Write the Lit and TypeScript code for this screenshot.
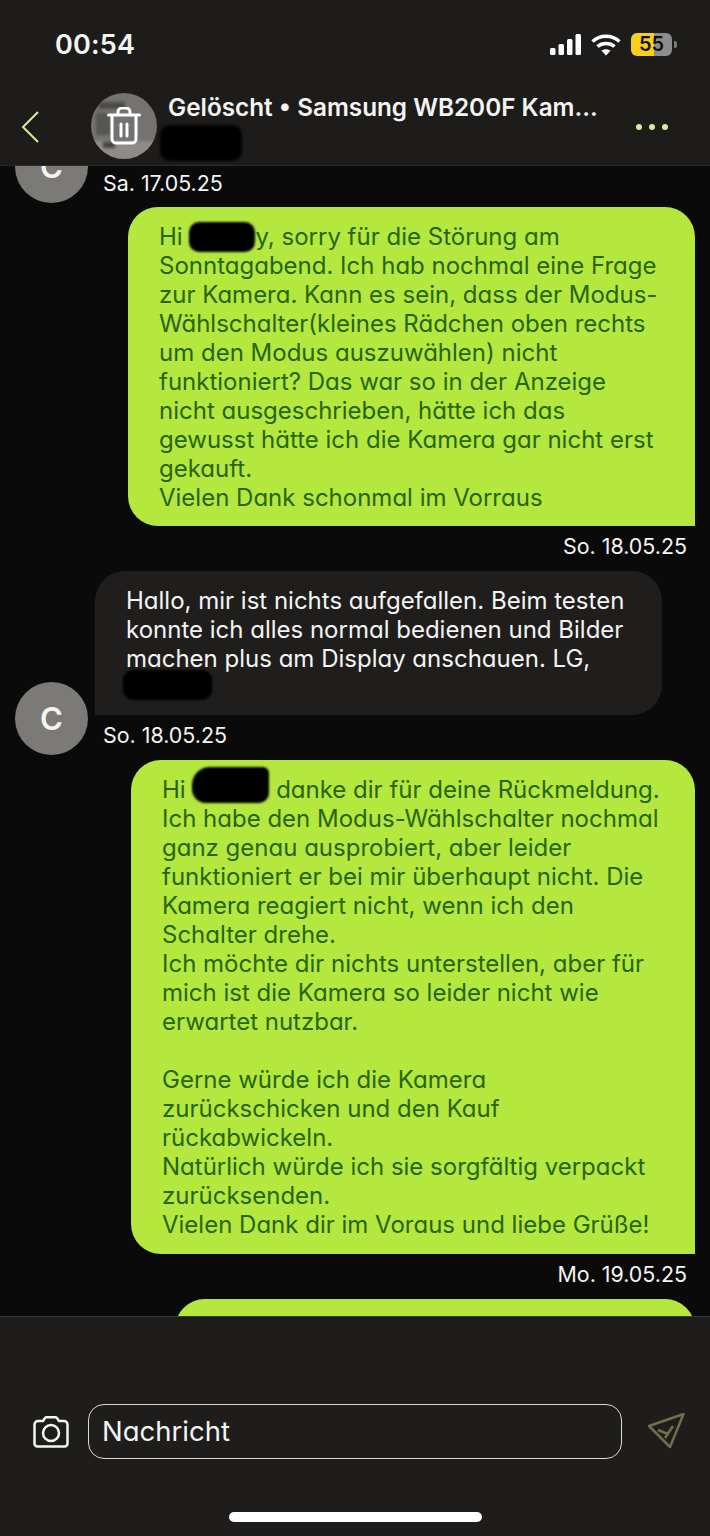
import { LitElement, html, css } from "lit";
import { customElement } from "lit/decorators.js";

@customElement("app-root")
export class AppRoot extends LitElement {
  static styles = css`
    :host { display: block; width: 710px; height: 1536px; overflow: hidden; background: #0a0a0a; font-family: "Inter", "Liberation Sans", sans-serif; color: #f4f4f2; }
    .page { height: 1536px; display: flex; flex-direction: column; }
    .top { height: 166px; flex: none; background: #1e1c1b; border-bottom: 1px solid #2c2a28; box-sizing: border-box; position: relative; z-index: 2; }
    .status { height: 92px; display: flex; align-items: flex-start; justify-content: space-between; padding: 29px 38px 0 55px; box-sizing: border-box; }
    .time { font-size: 27px; font-weight: 600; line-height: 32px; letter-spacing: 0.2px; }
    .sys { display: flex; align-items: center; gap: 10px; padding-top: 4px; }
    .battery { position: relative; width: 41px; height: 23px; border-radius: 6px; background: linear-gradient(90deg, #f7cf1c 0 56%, #8d8d8d 56%); color: #111; font-size: 20px; font-weight: 600; line-height: 23px; text-align: center; }
    .nub { position: absolute; right: -5px; top: 8px; width: 3px; height: 7px; background: #777; border-radius: 0 2px 2px 0; }
    .nav { position: relative; height: 73px; }
    .back { position: absolute; left: 20px; top: 18px; }
    .avatar { position: absolute; left: 91px; top: 1px; width: 66px; height: 66px; border-radius: 50%; background: #747371; display: flex; align-items: center; justify-content: center; overflow: hidden; }
    .photo { position: absolute; inset: 0; filter: blur(1.5px); }
    .trash { position: relative; }
    .title { position: absolute; left: 168px; top: -1px; font-size: 24.3px; font-weight: 600; line-height: 32px; white-space: nowrap; }
    .sub { position: absolute; left: 160px; top: 33px; width: 82px; height: 36px; background: #000; border-radius: 10px; filter: blur(1.5px); }
    .more { position: absolute; left: 636px; top: 32px; display: flex; gap: 7px; }
    .more i { width: 6px; height: 6px; border-radius: 50%; background: #d6eb9d; }
    .chat { flex: 1; min-height: 0; overflow: hidden; }
    .list { display: flex; flex-direction: column; padding-top: 4px; }
    .av { position: absolute; left: 15px; bottom: -7px; width: 73px; height: 73px; border-radius: 50%; background: #7b7a76; color: #f4f4f2; font-size: 31px; font-weight: 600; display: flex; align-items: center; justify-content: center; }
    .stamp { font-size: 21.4px; line-height: 26px; white-space: nowrap; margin-top: 7px; }
    .stamp.l { position: relative; padding-left: 103px; }
    .stamp.r { text-align: right; padding-right: 23px; }
    .stamp.first { margin-top: 0; }
    .bubble { font-size: 24px; line-height: 29px; white-space: nowrap; box-sizing: border-box; font-feature-settings: "cv11"; }
    .me { background: #b4e83f; color: #27650f; border-radius: 30px 30px 0 30px; margin-left: auto; margin-right: 15px; margin-top: 12px; padding: 15px 0 0 31px; }
    .them { width: 567px; height: 144px; margin: 12px 0 0 95px; background: #201e1d; color: #f4f4f2; border-radius: 30px 30px 30px 0; padding: 15px 0 0 31px; }
    .m1 { width: 567px; height: 319px; margin-top: 11px; }
    .m2 { width: 564px; height: 494px; }
    .m3 { width: 520px; height: 60px; padding: 0; }
    .blob { display: inline-block; background: #000; border-radius: 10px; filter: blur(1px); vertical-align: top; }
    .b1 { width: 66px; height: 30px; margin-bottom: -1px; }
    .b2 { width: 89px; height: 30px; margin: -3px 0 2px -3px; }
    .b3 { width: 77px; height: 36px; margin: -8px 0 1px; border-radius: 18px 6px 10px 14px; }
    .composer { height: 220px; flex: none; background: #1f1d1c; border-top: 1px solid #3a3937; box-sizing: border-box; position: relative; z-index: 2; }
    .row { display: flex; align-items: center; padding: 87px 24px 0 33px; gap: 19px; }
    .input { flex: 1; height: 55px; box-sizing: border-box; border: 1.5px solid #d8d8d6; border-radius: 16px; font-size: 27.5px; line-height: 52px; padding-left: 13px; font-feature-settings: "cv11"; }
    .send { margin-left: 7px; }
    .bar { position: absolute; left: 229px; top: 195px; width: 253px; height: 10px; border-radius: 5px; background: #fff; }
  `;

  render() {
    return html`<div class="page">
      <div class="top">
        <div class="status">
          <div class="time">00:54</div>
          <div class="sys">
            <svg width="31" height="21" viewBox="0 0 31 21"><g fill="#fff"><rect x="0" y="14" width="5.500" height="7" rx="1.500"/><rect x="8.500" y="10" width="5.500" height="11" rx="1.500"/><rect x="17" y="5" width="5.500" height="16" rx="1.500"/><rect x="25.500" y="0" width="5.500" height="21" rx="1.500"/></g></svg>
            <svg width="30" height="22" viewBox="0 0 30 22" fill="none" stroke="#fff" stroke-width="3.400"><path d="M1.500 7.500C9 .5 21 .5 28.500 7.500"/><path d="M6.500 12.500C11 8.500 19 8.500 23.500 12.500"/><path d="M15 21.500 10.500 16.800C13 14.800 17 14.800 19.500 16.800Z" fill="#fff" stroke="none"/></svg>
            <div class="battery">55<span class="nub"></span></div>
          </div>
        </div>
        <div class="nav">
          <svg class="back" width="20" height="34" viewBox="0 0 20 34" fill="none" stroke="#d4ee94" stroke-width="2"><path d="M18 2 3 17l15 15"/></svg>
          <div class="avatar">
            <svg class="photo" viewBox="0 0 66 66"><rect x="8" y="9" width="26" height="7" fill="#4d4b48"/><rect x="5" y="20" width="14" height="22" fill="#575653"/><rect x="0" y="48" width="66" height="18" fill="#8d8c89"/><rect x="12" y="49" width="12" height="6" fill="#444341"/></svg>
            <svg class="trash" width="34" height="38" viewBox="0 0 34 38" fill="none" stroke="#fff" stroke-width="3" stroke-linecap="round" stroke-linejoin="round"><path d="M1.500 8h31M5 8v24a4 4 0 0 0 4 4h16a4 4 0 0 0 4-4V8M11 8V5a4 4 0 0 1 4-4h4a4 4 0 0 1 4 4v3M14 17v12M20 17v12"/></svg>
          </div>
          <div class="title">Gelöscht • Samsung WB200F Kam...</div>
          <div class="sub"></div>
          <div class="more"><i></i><i></i><i></i></div>
        </div>
      </div>
      <div class="chat">
        <div class="list">
          <div class="stamp l first"><div class="av">C</div>Sa. 17.05.25</div>
          <div class="bubble me m1">Hi <span class="blob b1"></span>y, sorry für die Störung am<br>Sonntagabend. Ich hab nochmal eine Frage<br>zur Kamera. Kann es sein, dass der Modus-<br>Wählschalter(kleines Rädchen oben rechts<br>um den Modus auszuwählen) nicht<br>funktioniert? Das war so in der Anzeige<br>nicht ausgeschrieben, hätte ich das<br>gewusst hätte ich die Kamera gar nicht erst<br>gekauft.<br>Vielen Dank schonmal im Vorraus</div>
          <div class="stamp r">So. 18.05.25</div>
          <div class="bubble them">Hallo, mir ist nichts aufgefallen. Beim testen<br>konnte ich alles normal bedienen und Bilder<br>machen plus am Display anschauen. LG,<br><span class="blob b2"></span></div>
          <div class="stamp l"><div class="av">C</div>So. 18.05.25</div>
          <div class="bubble me m2">Hi <span class="blob b3"></span> danke dir für deine Rückmeldung.<br>Ich habe den Modus-Wählschalter nochmal<br>ganz genau ausprobiert, aber leider<br>funktioniert er bei mir überhaupt nicht. Die<br>Kamera reagiert nicht, wenn ich den<br>Schalter drehe.<br>Ich möchte dir nichts unterstellen, aber für<br>mich ist die Kamera so leider nicht wie<br>erwartet nutzbar.<br><br>Gerne würde ich die Kamera<br>zurückschicken und den Kauf<br>rückabwickeln.<br>Natürlich würde ich sie sorgfältig verpackt<br>zurücksenden.<br>Vielen Dank dir im Voraus und liebe Grüße!</div>
          <div class="stamp r">Mo. 19.05.25</div>
          <div class="bubble me m3"></div>
        </div>
      </div>
      <div class="composer">
        <div class="row">
          <svg width="36" height="32" viewBox="0 0 36 32" fill="none" stroke="#f4f4f2" stroke-width="2.500" stroke-linejoin="round"><path d="M5 5h5l2-3a2 2 0 0 1 1.500-.8h9a2 2 0 0 1 1.500.8l2 3h5a3.500 3.500 0 0 1 3.500 3.500v19a3 3 0 0 1-3 3H4.500a3 3 0 0 1-3-3v-19A3.500 3.500 0 0 1 5 5Z"/><circle cx="18" cy="17" r="8"/></svg>
          <div class="input">Nachricht</div>
          <svg class="send" width="38" height="38" viewBox="0 0 38 38" fill="none" stroke="#6d7048" stroke-width="2.500" stroke-linejoin="round"><path d="M35.500 1 1 13l21 21ZM17 25l8-12M10 17l10 4"/></svg>
        </div>
        <div class="bar"></div>
      </div>
    </div>`;
  }
}
